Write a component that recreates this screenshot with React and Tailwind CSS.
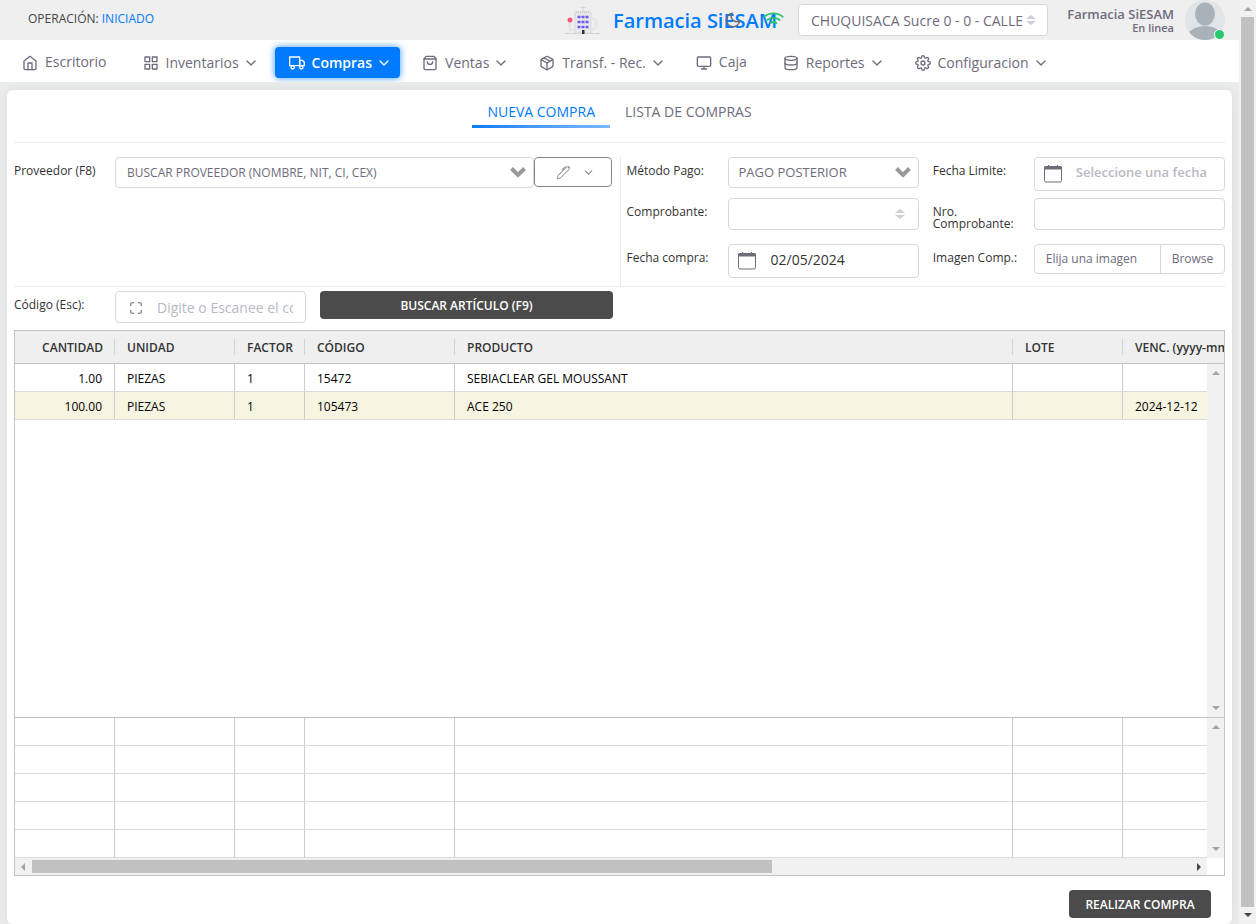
import { useState } from 'react';
import {
  FiHome,
  FiGrid,
  FiTruck,
  FiShoppingBag,
  FiPackage,
  FiMonitor,
  FiDatabase,
  FiSettings,
  FiChevronDown,
  FiMaximize,
  FiMoon,
  FiWifi
} from 'react-icons/fi';
import { BsPen } from 'react-icons/bs';

const menu = [
  { label: 'Escritorio', icon: FiHome },
  { label: 'Inventarios', icon: FiGrid, children: true },
  { label: 'Compras', icon: FiTruck, children: true, active: true },
  { label: 'Ventas', icon: FiShoppingBag, children: true },
  { label: 'Transf. - Rec.', icon: FiPackage, children: true },
  { label: 'Caja', icon: FiMonitor },
  { label: 'Reportes', icon: FiDatabase, children: true },
  { label: 'Configuracion', icon: FiSettings, children: true }
];

const rows = [
  { cantidad: '1.00', unidad: 'PIEZAS', factor: '1', codigo: '15472', producto: 'SEBIACLEAR GEL MOUSSANT', lote: '', venc: '' },
  { cantidad: '100.00', unidad: 'PIEZAS', factor: '1', codigo: '105473', producto: 'ACE 250', lote: '', venc: '2024-12-12' }
];

const headers = ['CANTIDAD', 'UNIDAD', 'FACTOR', 'CÓDIGO', 'PRODUCTO', 'LOTE', 'VENC. (yyyy-mm-dd)'];

const control = 'w-full rounded border border-[#d8d6de] bg-white text-[#6e6b7b] outline-none focus:border-[#007bff]';

function BuildingLogo() {
  return (
    <svg className="h-7 w-9 shrink-0" viewBox="0 0 36 28" fill="none">
      <path d="M0 27.5h36" stroke="#cfcfcf" strokeDasharray="5 1" />
      <path d="M18 0v5M15.500 1.500h5" stroke="#d4d4d4" />
      <path d="M10 6h16v21H10z" fill="#e8e8eb" stroke="#d8d8dc" />
      <path d="M11 6h14" stroke="#bbb" strokeDasharray="1 1" />
      <path d="M10 13c-5-1-6 3-6 6s1 5 6 5M26 12c4 0 5 3 5 6s-1 6-5 6M5 15v12" stroke="#dedede" />
      <circle cx="5" cy="14" r="2.500" fill="#ff5b79" />
      <path d="M12.500 11h11.500M12.500 16h11.500M12.500 21h11.500" stroke="#6a5cf0" strokeWidth="2.500" strokeDasharray="3 1" />
      <path d="M17 24h2.500v4H17z" fill="#2f2e41" />
    </svg>
  );
}

function Sorter({ className }) {
  return (
    <svg className={`pointer-events-none absolute h-3 w-2.5 ${className}`} viewBox="0 0 10 12" fill="#cfcdd6">
      <path d="M5 1l5 4H0zM5 11l5-4H0z" />
    </svg>
  );
}

function ThickChevron() {
  return (
    <svg className="pointer-events-none absolute right-2 top-2.5 h-3 w-4" viewBox="0 0 16 12" fill="none" stroke="#999" strokeWidth="4">
      <path d="M1.500 1.500L8 8l6.500-6.500" />
    </svg>
  );
}

function CalendarIcon() {
  return (
    <svg className="pointer-events-none absolute left-2.5 top-2 h-[18px] w-[18px]" viewBox="0 0 18 18" fill="none" stroke="#6e6b7b">
      <rect x="0.500" y="1.500" width="17" height="15.500" rx="1.500" />
      <path d="M0 3h18" strokeWidth="3" />
      <path d="M4.500 0v2M13.500 0v2" />
    </svg>
  );
}

function Label({ htmlFor, children }) {
  return (
    <label htmlFor={htmlFor} className="block pt-2 text-[12px] leading-3 text-[#333]">
      {children}
    </label>
  );
}

function Arrow({ dir, dark }) {
  const paths = {
    up: 'M0 6l4-4 4 4z',
    down: 'M0 2l4 4 4-4z',
    left: 'M6 0l-4 4 4 4z',
    right: 'M2 0l4 4-4 4z'
  };
  return (
    <svg className="h-2 w-2" viewBox="0 0 8 8" fill={dark ? '#444' : '#a3a3a3'}>
      <path d={paths[dir]} />
    </svg>
  );
}

function GridScroll() {
  return (
    <div className="flex w-[17px] shrink-0 flex-col items-center justify-between bg-[#f1f1f1] py-[5px]">
      <Arrow dir="up" />
      <Arrow dir="down" />
    </div>
  );
}

function Columns({ last }) {
  return (
    <colgroup>
      <col className="w-[100px]" />
      <col className="w-[120px]" />
      <col className="w-[70px]" />
      <col className="w-[150px]" />
      <col />
      <col className="w-[110px]" />
      <col className={last} />
    </colgroup>
  );
}

function Header() {
  return (
    <header className="flex h-10 items-center bg-[#efefef] pl-7 pr-3.5">
      <p className="flex-1 pb-0.5 text-[12px] leading-4 text-[#444]">
        OPERACIÓN: <span className="text-[#007bff]">INICIADO</span>
      </p>
      <BuildingLogo />
      <div className="relative ml-3 w-[185px] pt-0.5">
        <h1 className="whitespace-nowrap text-[20px] font-semibold leading-6 text-[#007bff]">Farmacia SiESAM</h1>
        <button type="button" aria-label="Modo oscuro" className="absolute right-14 top-1 text-[#6e6b7b]">
          <FiMoon size={18} />
        </button>
        <FiWifi size={21} className="absolute right-3.5 top-0.5 text-[#28c76f]" />
      </div>
      <div className="relative w-[250px]">
        <select aria-label="Sucursal" className={`${control} h-8 appearance-none pl-3 pr-5 text-[14px]`}>
          <option>CHUQUISACA Sucre 0 - 0 - CALLE</option>
        </select>
        <Sorter className="right-3 top-2.5" />
      </div>
      <div className="w-[126px] text-right text-[#6e6b7b]">
        <p className="text-[13px] font-semibold leading-4">Farmacia SiESAM</p>
        <p className="text-[11px] font-semibold leading-3">En linea</p>
      </div>
      <div className="relative ml-[11px] h-10 w-10 shrink-0">
        <svg viewBox="0 0 40 40" className="h-10 w-10 overflow-hidden rounded-full bg-[#e1e5e8]" fill="#aab2b9">
          <ellipse cx="20" cy="14" rx="10" ry="11.500" />
          <ellipse cx="20" cy="38" rx="18" ry="12" />
        </svg>
        <span className="absolute bottom-0 right-0 h-[11px] w-[11px] rounded-full border border-white bg-[#28c76f]" />
      </div>
    </header>
  );
}

function Nav() {
  return (
    <nav className="flex h-[42px] items-end gap-2 bg-white px-2 pb-1">
      {menu.map(({ label, icon: Icon, children, active }) => (
        <a
          key={label}
          href="#"
          className={`flex h-[31px] items-center rounded pl-3.5 text-[14px] ${children ? 'pr-2' : 'pr-3.5'} ${
            active
              ? 'bg-[#007bff] font-semibold text-white shadow-[0_0_6px_1px_rgba(0,123,255,0.6)]'
              : 'font-medium text-[#6e6b7b]'
          }`}
        >
          <Icon size={16} />
          <span className={`ml-[7px] whitespace-nowrap ${children ? '' : 'pb-0.5'}`}>{label}</span>
          {children && <FiChevronDown size={16} className="ml-1" />}
        </a>
      ))}
    </nav>
  );
}

function Tabs({ tab, setTab }) {
  const items = ['NUEVA COMPRA', 'LISTA DE COMPRAS'];
  return (
    <div className="flex justify-center pt-3">
      {items.map((item) => (
        <button
          key={item}
          type="button"
          onClick={() => setTab(item)}
          className={`px-[15px] text-[14px] leading-5 ${tab === item ? 'text-[#007bff]' : 'text-[#6e6b7b]'}`}
        >
          {item}
          <span
            className={`-mx-[15px] mt-[3px] block h-[3px] ${
              tab === item ? 'bg-linear-to-r from-[#007bff] to-[#7ab8ff]' : ''
            }`}
          />
        </button>
      ))}
    </div>
  );
}

function PurchaseForm() {
  return (
    <>
      <div className="flex border-y border-[#ebe9f1] pt-3.5">
        {/* Proveedor */}
        <div className="flex w-1/2 items-start pr-2">
          <div className="w-[101px] shrink-0">
            <Label htmlFor="proveedor">Proveedor (F8)</Label>
          </div>
          <div className="relative flex-1">
            <select id="proveedor" className={`${control} h-[31px] appearance-none pl-[11px] pr-8 text-[12px]`}>
              <option>BUSCAR PROVEEDOR (NOMBRE, NIT, CI, CEX)</option>
            </select>
            <ThickChevron />
          </div>
          <button
            type="button"
            aria-label="Editar proveedor"
            className="flex h-[30px] w-[78px] items-center justify-center gap-3 rounded border border-[#82868b] pl-1.5 text-[#82868b]"
          >
            <BsPen size={13} />
            <FiChevronDown size={13} />
          </button>
        </div>

        {/* Datos de la compra */}
        <div className="grid w-1/2 grid-cols-[87px_1fr_87px_1fr] grid-rows-[41px_46px_42px] items-start gap-x-3.5 border-l border-[#ebe9f1] pl-1.5">
          <Label htmlFor="metodo">Método Pago:</Label>
          <div className="relative">
            <select id="metodo" className={`${control} h-[31px] appearance-none pl-2.5 pr-8 text-[13px]`}>
              <option>PAGO POSTERIOR</option>
            </select>
            <ThickChevron />
          </div>
          <Label htmlFor="limite">Fecha Limite:</Label>
          <div className="relative">
            <input
              id="limite"
              type="text"
              placeholder="Seleccione una fecha"
              className={`${control} h-[34px] pb-1 pl-[41px] text-[13px] font-semibold placeholder:text-[#b9b9c3]`}
            />
            <CalendarIcon />
          </div>

          <Label htmlFor="comprobante">Comprobante:</Label>
          <div className="relative">
            <select id="comprobante" className={`${control} h-8 appearance-none px-3`}>
              <option></option>
            </select>
            <Sorter className="right-3.5 top-2.5" />
          </div>
          <Label htmlFor="nro">Nro. Comprobante:</Label>
          <input id="nro" type="text" className={`${control} h-8 px-3 text-[13px]`} />

          <Label htmlFor="fecha">Fecha compra:</Label>
          <div className="relative">
            <input
              id="fecha"
              type="text"
              defaultValue="02/05/2024"
              className="h-[34px] w-full rounded border border-[#d8d6de] pb-1 pl-[42px] text-[14px] font-medium text-[#333] outline-none"
            />
            <CalendarIcon />
          </div>
          <Label htmlFor="imagen">Imagen Comp.:</Label>
          <label className="flex h-[30px] items-stretch overflow-hidden rounded border border-[#d8d6de] text-[12px] font-medium leading-7 text-[#6e6b7b]">
            <input id="imagen" type="file" className="sr-only" />
            <span className="flex-1 whitespace-nowrap pl-[11px]">Elija una imagen</span>
            <span className="w-16 border-l border-[#d8d6de] text-center">Browse</span>
          </label>
        </div>
      </div>

      <div className="flex h-[43px] items-start pt-1">
        <div className="w-[101px] shrink-0">
          <Label htmlFor="codigo">Código (Esc):</Label>
        </div>
        <div className="relative w-[191px]">
          <input
            id="codigo"
            type="text"
            placeholder="Digite o Escanee el código"
            className={`${control} h-8 pl-[41px] pr-3 text-[14px] placeholder:text-[#b9b9c3]`}
          />
          <FiMaximize size={14} className="pointer-events-none absolute left-3.5 top-2.5 text-[#6e6b7b]" />
        </div>
        <button type="button" className="ml-3.5 h-7 w-[293px] rounded bg-[#4b4b4b] pt-px text-[12px] font-semibold text-white">
          BUSCAR ARTÍCULO (F9)
        </button>
      </div>
    </>
  );
}

function PurchaseGrid() {
  const cell = 'h-7 truncate border-b border-[#dadada] border-r border-r-[#ccc] px-3 pb-0 pt-0.5 last:border-r-0';
  return (
    <div className="flex flex-1 flex-col border border-[#bdc3c7] text-[12px] text-black">
      <table className="w-full table-fixed border-separate border-spacing-0 bg-[#efefef] text-[#333]">
        <Columns last="w-[101px]" />
        <thead>
          <tr>
            {headers.map((title, i) => (
              <th key={title} className="h-[33px] overflow-hidden border-b border-[#bdc3c7] p-0 font-semibold">
                <div
                  className={`h-4 whitespace-nowrap pl-3 leading-[18px] ${i === 0 ? 'pr-[11px] text-right' : 'text-left'} ${
                    i < 6 ? 'border-r border-[#d0d4d8]' : ''
                  }`}
                >
                  {title}
                </div>
              </th>
            ))}
          </tr>
        </thead>
      </table>

      <div className="flex min-h-[340px] flex-1">
        <div className="min-w-0 flex-1">
          <table className="w-full table-fixed border-separate border-spacing-0">
            <Columns last="w-[84px]" />
            <tbody>
              {rows.map((row) => (
                <tr key={row.codigo} className="even:bg-[#f7f4e1]">
                  <td className={`${cell} text-right`}>{row.cantidad}</td>
                  <td className={cell}>{row.unidad}</td>
                  <td className={cell}>{row.factor}</td>
                  <td className={cell}>{row.codigo}</td>
                  <td className={cell}>{row.producto}</td>
                  <td className={cell}>{row.lote}</td>
                  <td className="h-7 whitespace-nowrap border-b border-[#dadada] pb-0 pl-3 pt-0.5">{row.venc}</td>
                </tr>
              ))}
            </tbody>
          </table>
        </div>
        <GridScroll />
      </div>

      {/* Totales */}
      <div className="flex border-t border-[#bdc3c7]">
        <table className="min-w-0 flex-1 table-fixed border-separate border-spacing-0">
          <Columns last="w-[84px]" />
          <tbody>
            {[0, 1, 2, 3, 4].map((n) => (
              <tr key={n}>
                {headers.map((title) => (
                  <td key={title} className={cell}></td>
                ))}
              </tr>
            ))}
          </tbody>
        </table>
        <GridScroll />
      </div>
      <div className="mr-[17px] flex h-[17px] items-center justify-between bg-[#f1f1f1] px-1">
        <Arrow dir="left" />
        <div className="ml-[5px] flex-1">
          <div className="h-[13px] w-7/11 bg-[#c1c1c1]" />
        </div>
        <Arrow dir="right" dark />
      </div>
    </div>
  );
}

export default function App() {
  const [tab, setTab] = useState('NUEVA COMPRA');

  return (
    <div className="flex min-h-screen bg-[#efefef] font-['Open_Sans','Noto_Sans',sans-serif]">
      <div className="flex min-w-0 flex-1 flex-col">
        <Header />
        <Nav />
        <div className="flex flex-1 flex-col bg-[#eaebeb] px-[7px] pt-2">
          <main className="flex flex-1 flex-col rounded-md bg-white px-[7px] shadow-[0_0_12px_rgba(34,41,47,0.06)]">
            <Tabs tab={tab} setTab={setTab} />
            <div className="mt-3.5 flex flex-1 flex-col">
              <PurchaseForm />
              <PurchaseGrid />
            </div>
            <div className="flex justify-end pb-1.5 pr-3.5 pt-3.5">
              <button type="button" className="h-7 w-[142px] rounded bg-[#4b4b4b] pt-px text-[12px] font-semibold text-white">
                REALIZAR COMPRA
              </button>
            </div>
          </main>
        </div>
      </div>

      {/* Page scroll bar */}
      <div className="flex w-[17px] shrink-0 flex-col items-center bg-[#f1f1f1] py-[5px]">
        <Arrow dir="up" />
        <div className="my-1 w-[13px] flex-1 bg-[#c1c1c1]" />
        <Arrow dir="down" dark />
      </div>
    </div>
  );
}
